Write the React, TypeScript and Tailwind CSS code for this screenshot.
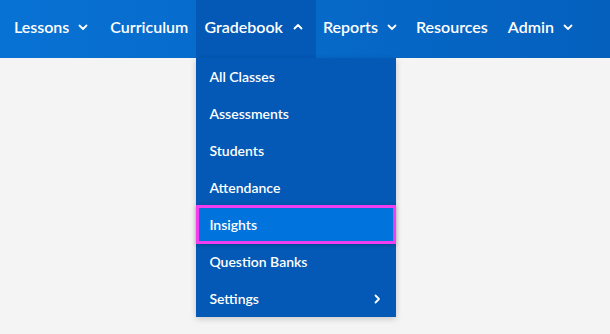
import React from 'react';

const font = { fontFamily: 'Lato, "Open Sans", Arial, sans-serif' };

const Chevron: React.FC<{ dir?: 'down' | 'up' | 'right' }> = ({ dir = 'down' }) => {
  const d =
    dir === 'down' ? 'M1.5 3.5 L5 7 L8.5 3.5' : dir === 'up' ? 'M1.5 6.5 L5 3 L8.5 6.5' : 'M3.5 1.5 L7 5 L3.5 8.5';
  return (
    <svg width="10" height="10" viewBox="0 0 10 10" fill="none" className="shrink-0">
      <path d={d} stroke="white" strokeWidth="1.8" strokeLinecap="round" strokeLinejoin="round" />
    </svg>
  );
};

const menuItems = ['All Classes', 'Assessments', 'Students', 'Attendance', 'Insights', 'Question Banks', 'Settings'];

export default function App() {
  return (
    <div className="w-[610px] h-[334px] bg-[#f4f4f4] overflow-hidden" style={font}>
      {/* Top nav */}
      <nav className="h-[58px] flex items-stretch pl-[4px] bg-gradient-to-r from-[#0872d4] to-[#0560bd] text-white text-[16px] font-semibold">
        <div className="flex items-center gap-[9px] px-[10px] pb-[4px]">
          <span>Lessons</span>
          <Chevron />
        </div>
        <div className="flex items-center pl-[10px] pr-[8px] ml-[2px] pb-[4px]">
          <span>Curriculum</span>
        </div>
        <div className="relative flex items-center gap-[10px] pl-[8px] pr-[13px] bg-[#0359b5]">
          <span className="pb-[4px]">Gradebook</span>
          <span className="pb-[4px]">
            <Chevron dir="up" />
          </span>

          {/* Dropdown */}
          <div className="absolute left-0 top-full w-[200px] bg-[#0359b5] shadow-[0_2px_6px_rgba(0,0,0,0.18)] text-[14px]">
            {menuItems.map((item) => (
              <div
                key={item}
                className={`relative h-[37px] flex items-center justify-between pl-[13px] pr-[14px] ${
                  item === 'Insights' ? 'bg-[#0074dc]' : ''
                }`}
              >
                <span>{item}</span>
                {item === 'Settings' && <Chevron dir="right" />}
                {item === 'Insights' && (
                  <div className="absolute inset-x-0 -inset-y-[1px] border-[3px] border-[#f23ef0] shadow-[0_1px_4px_rgba(0,0,0,0.25)]" />
                )}
              </div>
            ))}
          </div>
        </div>
        <div className="flex items-center gap-[9px] pl-[7px] pr-[8px] pb-[4px]">
          <span>Reports</span>
          <Chevron />
        </div>
        <div className="flex items-center pl-[11px] pr-[12px] pb-[4px]">
          <span>Resources</span>
        </div>
        <div className="flex items-center gap-[9px] px-[8px] pb-[4px]">
          <span>Admin</span>
          <Chevron />
        </div>
      </nav>
    </div>
  );
}
